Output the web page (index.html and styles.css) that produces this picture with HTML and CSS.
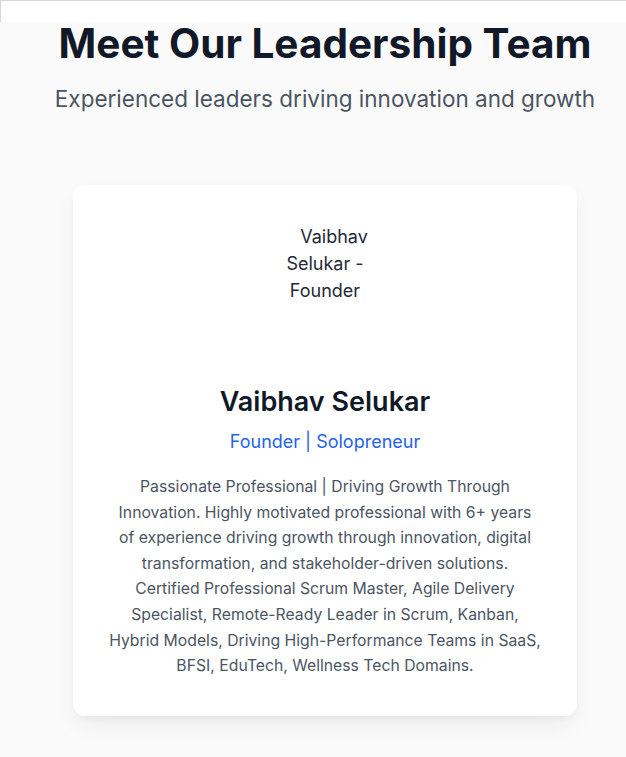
FILE: index.html
```html
<!DOCTYPE html>
<html lang="en">
<head>
<meta charset="utf-8">
<title>Meet Our Leadership Team</title>
<link rel="stylesheet" href="styles.css">
</head>
<body>
<div class="topbar"></div>
<section class="team">
  <h1 class="title">Meet Our Leadership Team</h1>
  <p class="subtitle">Experienced leaders driving innovation and growth</p>
  <div class="card">
    <div class="photo"><span class="alt">Vaibhav Selukar - Founder</span></div>
    <h2 class="name">Vaibhav Selukar</h2>
    <p class="role">Founder | Solopreneur</p>
    <p class="bio">Passionate Professional | Driving Growth Through Innovation. Highly motivated professional with 6+ years of experience driving growth through innovation, digital transformation, and stakeholder-driven solutions. Certified Professional Scrum Master, Agile Delivery Specialist, Remote-Ready Leader in Scrum, Kanban, Hybrid Models, Driving High-Performance Teams in SaaS, BFSI, EduTech, Wellness Tech Domains.</p>
  </div>
</section>
</body>
</html>
```
FILE: styles.css
```css
* { box-sizing: border-box; }
html, body { margin: 0; padding: 0; }
body {
  background: #fafafa;
  font-family: Inter, "Noto Sans", sans-serif;
  color: #111827;
  min-height: 757px;
  overflow: hidden;
}
.topbar {
  height: 22px;
  background: #ffffff;
  border-top: 1px solid #d6d6d6;
  border-left: 1px solid #d6d6d6;
}
.team {
  display: flex;
  flex-direction: column;
  align-items: center;
  padding-left: 24px;
}
.title {
  margin: 0;
  font-size: 40.5px;
  line-height: 44px;
  font-weight: 700;
  color: #111827;
  text-align: center;
  white-space: nowrap;
}
.subtitle {
  margin: 12px 0 0;
  font-size: 22.5px;
  line-height: 42px;
  color: #4b5563;
  text-align: center;
  white-space: nowrap;
}
.card {
  margin-top: 65px;
  width: 504px;
  background: #ffffff;
  border-radius: 12px;
  box-shadow: 0 10px 25px -5px rgba(0,0,0,0.08), 0 4px 10px -4px rgba(0,0,0,0.06);
  padding: 36px 36px 37px;
  display: flex;
  flex-direction: column;
  align-items: center;
  text-align: center;
}
.photo {
  width: 128px;
  height: 148px;
  padding-top: 2px;
  font-size: 18px;
  line-height: 27px;
  color: #1f2937;
  text-align: center;
  text-indent: 18px;
}
.name {
  margin: 17px 0 0;
  font-size: 27px;
  line-height: 32px;
  font-weight: 600;
  color: #111827;
}
.role {
  margin: 10px 0 0;
  font-size: 18px;
  line-height: 28px;
  color: #2563eb;
}
.bio {
  margin: 18px 0 0;
  font-size: 15.75px;
  line-height: 25.6px;
  color: #4b5563;
}
```
